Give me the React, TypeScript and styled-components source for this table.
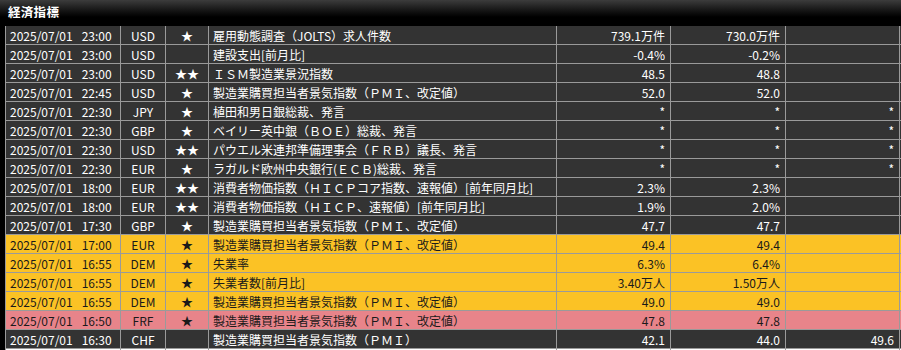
import React from 'react';
import styled, { createGlobalStyle } from 'styled-components';

type Tone = 'dark' | 'yellow' | 'pink' | 'white';
type Align = 'left' | 'center' | 'right';

interface Indicator {
  date: string;
  time: string;
  currency: string;
  stars: number;
  name: string;
  previous: string;
  forecast: string;
  result: string;
  tone: Tone;
}

const rows: Indicator[] = [
  { date: '2025/07/01', time: '23:00', currency: 'USD', stars: 1, name: '雇用動態調査（JOLTS）求人件数', previous: '739.1万件', forecast: '730.0万件', result: '', tone: 'dark' },
  { date: '2025/07/01', time: '23:00', currency: 'USD', stars: 0, name: '建設支出[前月比]', previous: '-0.4%', forecast: '-0.2%', result: '', tone: 'dark' },
  { date: '2025/07/01', time: '23:00', currency: 'USD', stars: 2, name: 'ＩＳＭ製造業景況指数', previous: '48.5', forecast: '48.8', result: '', tone: 'dark' },
  { date: '2025/07/01', time: '22:45', currency: 'USD', stars: 1, name: '製造業購買担当者景気指数（ＰＭＩ、改定値）', previous: '52.0', forecast: '52.0', result: '', tone: 'dark' },
  { date: '2025/07/01', time: '22:30', currency: 'JPY', stars: 1, name: '植田和男日銀総裁、発言', previous: '*', forecast: '*', result: '*', tone: 'dark' },
  { date: '2025/07/01', time: '22:30', currency: 'GBP', stars: 1, name: 'ベイリー英中銀（ＢＯＥ）総裁、発言', previous: '*', forecast: '*', result: '*', tone: 'dark' },
  { date: '2025/07/01', time: '22:30', currency: 'USD', stars: 2, name: 'パウエル米連邦準備理事会（ＦＲＢ）議長、発言', previous: '*', forecast: '*', result: '*', tone: 'dark' },
  { date: '2025/07/01', time: '22:30', currency: 'EUR', stars: 1, name: 'ラガルド欧州中央銀行(ＥＣＢ)総裁、発言', previous: '*', forecast: '*', result: '*', tone: 'dark' },
  { date: '2025/07/01', time: '18:00', currency: 'EUR', stars: 2, name: '消費者物価指数（ＨＩＣＰコア指数、速報値）[前年同月比]', previous: '2.3%', forecast: '2.3%', result: '', tone: 'dark' },
  { date: '2025/07/01', time: '18:00', currency: 'EUR', stars: 2, name: '消費者物価指数（ＨＩＣＰ、速報値）[前年同月比]', previous: '1.9%', forecast: '2.0%', result: '', tone: 'dark' },
  { date: '2025/07/01', time: '17:30', currency: 'GBP', stars: 1, name: '製造業購買担当者景気指数（ＰＭＩ、改定値）', previous: '47.7', forecast: '47.7', result: '', tone: 'dark' },
  { date: '2025/07/01', time: '17:00', currency: 'EUR', stars: 1, name: '製造業購買担当者景気指数（ＰＭＩ、改定値）', previous: '49.4', forecast: '49.4', result: '', tone: 'yellow' },
  { date: '2025/07/01', time: '16:55', currency: 'DEM', stars: 1, name: '失業率', previous: '6.3%', forecast: '6.4%', result: '', tone: 'yellow' },
  { date: '2025/07/01', time: '16:55', currency: 'DEM', stars: 1, name: '失業者数[前月比]', previous: '3.40万人', forecast: '1.50万人', result: '', tone: 'yellow' },
  { date: '2025/07/01', time: '16:55', currency: 'DEM', stars: 1, name: '製造業購買担当者景気指数（ＰＭＩ、改定値）', previous: '49.0', forecast: '49.0', result: '', tone: 'yellow' },
  { date: '2025/07/01', time: '16:50', currency: 'FRF', stars: 1, name: '製造業購買担当者景気指数（ＰＭＩ、改定値）', previous: '47.8', forecast: '47.8', result: '', tone: 'pink' },
  { date: '2025/07/01', time: '16:30', currency: 'CHF', stars: 0, name: '製造業購買担当者景気指数（ＰＭＩ）', previous: '42.1', forecast: '44.0', result: '49.6', tone: 'dark' },
  { date: '', time: '', currency: '', stars: 0, name: '', previous: '', forecast: '', result: '', tone: 'white' },
];

const toneBg: Record<Tone, string> = {
  dark: '#333333',
  yellow: '#fbc225',
  pink: '#e8848a',
  white: '#ffffff',
};

const toneText: Record<Tone, string> = {
  dark: '#ffffff',
  yellow: '#1a1a1a',
  pink: '#1a1a1a',
  white: '#1a1a1a',
};

const App: React.FC = () => {
  return (
    <Panel>
      <GlobalStyle />
      <TitleBar>
        <Title>経済指標</Title>
      </TitleBar>
      <Table>
        {rows.map((row, i) => (
          <Row key={i} tone={row.tone}>
            <Cell align="left">
              {row.date}
              <Time>{row.time}</Time>
            </Cell>
            <Cell align="center">{row.currency}</Cell>
            <Cell align="center">{'★'.repeat(row.stars)}</Cell>
            <Cell align="left">{row.name}</Cell>
            <Cell align="right">{row.previous}</Cell>
            <Cell align="right">{row.forecast}</Cell>
            <Cell align="right">{row.result}</Cell>
          </Row>
        ))}
      </Table>
    </Panel>
  );
};

export default App;

const GlobalStyle = createGlobalStyle`
  body {
    margin: 0;
    background: #000000;
    font-family: Meiryo, "Noto Sans CJK JP", "Noto Sans", sans-serif;
  }
`;

const Panel = styled.div`
  width: 901px;
  height: 350px;
  overflow: hidden;
  background: #000000;
`;

const TitleBar = styled.div`
  height: 26px;
  display: flex;
  align-items: center;
  padding: 0 8px 4px;
  box-sizing: border-box;
  background: linear-gradient(#3c3c3c 0%, #1a1a1a 35%, #000000 65%);
`;

const Title = styled.h1`
  margin: 0;
  font-size: 12.5px;
  font-weight: bold;
  color: #ffffff;
  letter-spacing: 0.3px;
`;

const Table = styled.div`
  margin-left: 5px;
  border-left: 1px solid #9a9a9a;
  display: flex;
  flex-direction: column;
`;

const Row = styled.div<{ tone: Tone }>`
  display: grid;
  grid-template-columns: 115px 45px 43px 348px 114px 115px 114px;
  border-bottom: 1px solid #9a9a9a;
  background: ${(p) => toneBg[p.tone]};
  color: ${(p) => toneText[p.tone]};
`;

const Cell = styled.div<{ align: Align }>`
  box-sizing: border-box;
  height: 18px;
  padding-top: 1px;
  line-height: 17px;
  font-size: 12px;
  white-space: nowrap;
  overflow: hidden;
  border-right: 1px solid #9a9a9a;
  text-align: ${(p) => p.align};
  padding-left: ${(p) => (p.align === 'left' ? '4px' : '0')};
  padding-right: ${(p) => (p.align === 'right' ? '5px' : '0')};
`;

const Time = styled.span`
  margin-left: 9px;
`;
